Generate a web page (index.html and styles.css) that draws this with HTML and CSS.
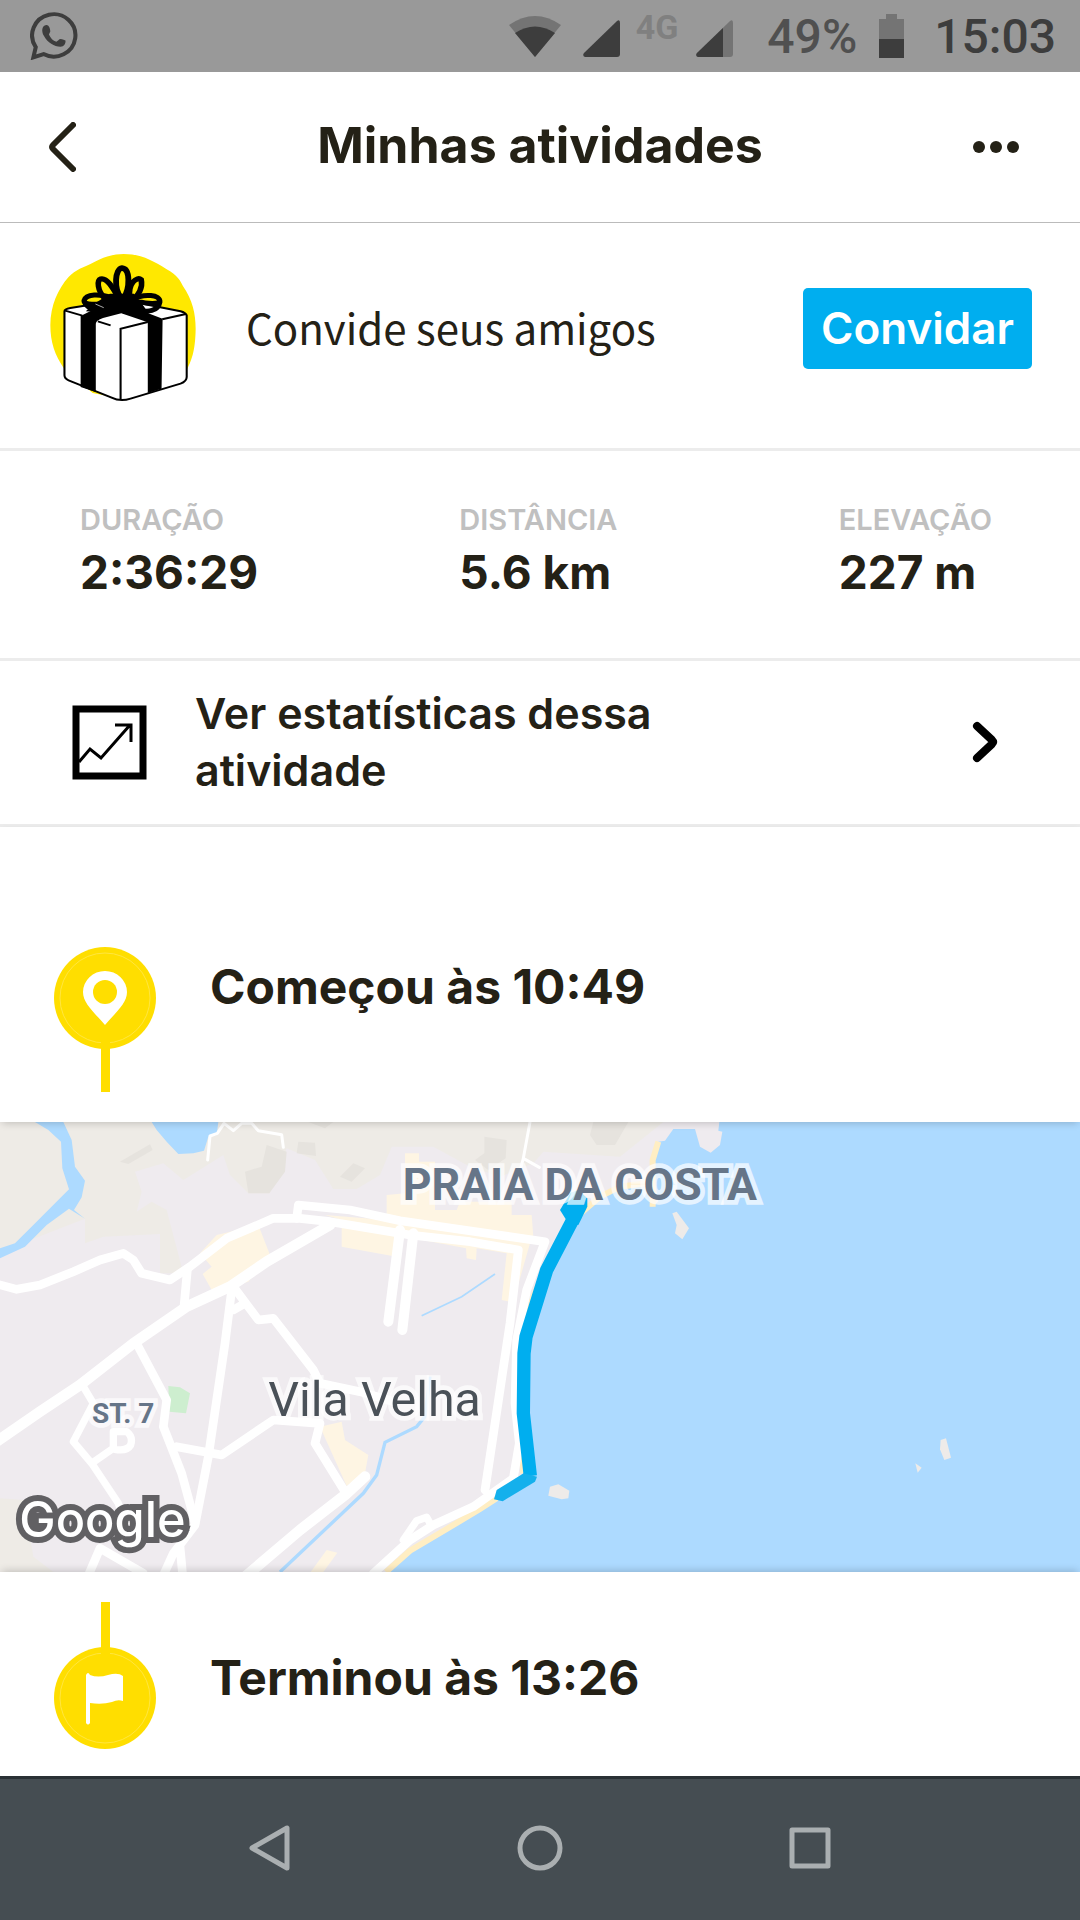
FILE: index.html
```html
<!DOCTYPE html>
<html lang="pt-BR">
<head>
  <meta charset="UTF-8" />
  <meta name="viewport" content="width=device-width, initial-scale=1.0"/>
  <title>Minhas atividades</title>
  <link rel="stylesheet" href="styles.css">
</head>
<body>

  <div class="status-bar">
    <svg class="status-app" width="48" height="48" viewBox="86 36 142 145" preserveAspectRatio="none">
      <path d="M103 142A64 64 0 1 1 126 163L96 173Z" fill="none" stroke="#3d3d3d" stroke-width="12"/>
      <path d="M134 75C121 77 119 94 127 108C138 129 158 141 176 141C187 140 192 132 191 122Q175 113 170 121L164 126C154 123 147 115 142 104L146 95C146 84 141 74 134 75Z" fill="#3d3d3d"/>
    </svg>
    <svg width="52" height="41" viewBox="0 0 52 41">
      <path d="M26 41L0 9Q26 -9 52 9Z" fill="#747474"/>
      <path d="M26 41L6 17Q26 4 46 17Z" fill="#3d3d3d"/>
    </svg>
    <svg class="signal" width="37" height="37" viewBox="0 0 37 37">
      <path d="M2 37Q-1 36 1 33L34 1Q37 -1 37 3V34Q37 37 34 37Z" fill="#3d3d3d"/>
    </svg>
    <span class="network">4G</span>
    <svg class="signal" width="37" height="37" viewBox="0 0 37 37">
      <path d="M2 37Q-1 36 1 33L34 1Q37 -1 37 3V34Q37 37 34 37Z" fill="#747474"/>
      <path d="M2 37Q-1 36 1 33L27 8V37Z" fill="#3d3d3d"/>
    </svg>
    <span class="battery-text">49%</span>
    <svg width="25" height="44" viewBox="0 0 25 44">
      <path d="M7 0H18V5H25V25H0V5H7Z" fill="#747474"/>
      <path d="M0 25H25V44H0Z" fill="#3d3d3d"/>
    </svg>
    <span class="clock">15:03</span>
  </div>

  <header class="header">
    <button class="icon-btn" aria-label="Voltar">
      <svg width="28" height="50" viewBox="0 0 28 50">
        <path d="M25 3L5 23Q3 25 5 27L25 47" fill="none" stroke="#242116" stroke-width="6" stroke-linecap="round"/>
      </svg>
    </button>
    <h1>Minhas atividades</h1>
    <button class="icon-btn" aria-label="Mais">
      <svg width="48" height="12" viewBox="0 0 48 12">
        <g fill="#242116"><circle cx="7" cy="6" r="6"/><circle cx="24" cy="6" r="6"/><circle cx="41" cy="6" r="6"/></g>
      </svg>
    </button>
  </header>

  <main>
    <section class="invite">
      <svg width="146" height="148" viewBox="146 86 424 444" preserveAspectRatio="none">
        <path d="M360 86C410 86 440 105 470 122C510 147 520 155 532 182C560 225 569 265 569 310C568 380 556 405 545 430L440 502L360 522L270 503L187 430C160 390 147 350 147 300C147 240 170 190 200 155C220 132 245 125 265 115C300 96 325 86 360 86Z" fill="#ffe800"/>
        <path d="M188 258V450Q188 460 200 465L325 517Q350 530 380 520L525 475Q543 468 543 455V270Q540 262 525 258L400 232H300L205 248Q188 251 188 258Z" fill="#fff" stroke="#000" stroke-width="6"/>
        <path d="M190 256L240 271M285 288L322 300M351 524V310L430 290M472 282L541 266" fill="none" stroke="#000" stroke-width="6"/>
        <path d="M235 272L300 238L380 232L435 265L473 280L470 490L430 503V291L353 264L300 278Q280 285 279 295V500L235 485Z"/>
        <path d="M320 205H390L420 245L430 265L380 255L330 262L250 258L270 238Z"/>
        <path d="M353 218C330 190 335 130 355 128C380 130 378 190 360 218" fill="none" stroke="#000" stroke-width="17"/>
        <path d="M305 220C283 195 282 165 293 161C313 156 330 190 345 218M378 215C372 175 398 152 411 163C417 190 400 210 390 222" fill="none" stroke="#000" stroke-width="16"/>
        <path d="M325 228C280 240 244 240 245 226C250 204 290 205 330 218M245 228Q252 248 285 256M385 222C420 203 467 208 465 230C460 258 430 262 400 253M400 228Q440 238 462 232" fill="none" stroke="#000" stroke-width="15"/>
        <path d="M278 236L302 247" stroke="#fff" stroke-width="2"/>
      </svg>
      <p>Convide seus amigos</p>
      <button class="invite-btn">Convidar</button>
    </section>

    <dl class="stats">
      <div>
        <dt>DURAÇÃO</dt>
        <dd>2:36:29</dd>
      </div>
      <div>
        <dt>DISTÂNCIA</dt>
        <dd>5.6 km</dd>
      </div>
      <div>
        <dt>ELEVAÇÃO</dt>
        <dd>227 m</dd>
      </div>
    </dl>

    <a class="stats-link" href="#">
      <svg width="75" height="75" viewBox="0 0 75 75">
        <rect x="4" y="4" width="67" height="67" fill="none" stroke="#000" stroke-width="7"/>
        <path d="M7 57L18 44L29 53L58 20M43 20H59V37" fill="none" stroke="#000" stroke-width="3"/>
      </svg>
      <span>Ver estatísticas dessa atividade</span>
      <svg width="26" height="42" viewBox="0 0 26 42">
        <path d="M5 5L20 19Q22 21 20 23L5 37" fill="none" stroke="#000" stroke-width="8" stroke-linecap="round"/>
      </svg>
    </a>

    <section class="event start">
      <svg width="102" height="145" viewBox="0 0 102 145">
        <circle cx="51" cy="51" r="51" fill="#ffde00"/>
        <circle cx="51" cy="51" r="45" fill="none" stroke="#ffe640"/>
        <path d="M47 90H56V145H47Z" fill="#ffde00"/>
        <path d="M51 78C39 64 29 56 29 45A22 21 0 0 1 73 45C73 56 63 64 51 78Z" fill="#fff"/>
        <circle cx="51" cy="45" r="12" fill="#ffde00"/>
      </svg>
      <h2>Começou às 10:49</h2>
    </section>

    <svg class="map" viewBox="0 36 3240 1350" role="img" aria-label="Mapa do percurso">
      <rect y="36" width="3240" height="1350" fill="#efebef"/>

      <!-- terrain -->
      <g fill="#eeebe6">
        <path d="M0 36H1990L1860 140L1630 125L1600 160L1500 200L1410 170L1300 110H1175L1140 195L1070 237H1000L945 150L860 115L808 250H745L690 195L670 135L550 210L490 160L405 185L425 245L410 305L455 275L500 300L550 490H480V372L310 380L255 400V326L0 425Z"/>
        <path d="M0 1165L70 1170L100 1340L160 1386H0Z"/>
      </g>
      <g fill="#e6e3de">
        <path d="M800 105L860 125L855 185L808 250H745L735 185L785 170Z"/>
        <path d="M360 155L450 103L458 120L385 162Z"/>
        <path d="M895 95L945 98L948 138L890 130Z"/>
        <path d="M1020 200L1060 160L1095 175L1055 215Z"/>
        <path d="M925 36H1000L975 55Z"/>
        <path d="M1453 80L1520 90L1517 145L1465 180L1425 150L1453 130Z"/>
        <path d="M1780 36H1885L1845 105H1790L1770 75Z"/>
      </g>
      <path d="M505 828L540 832L570 850L558 910L508 905Z" fill="#cdeecf"/>

      <!-- commercial areas -->
      <g fill="#fef5e3">
        <path d="M600 430L650 375L775 345L810 435L745 515L690 530L635 540L608 492L635 470Z"/>
        <path d="M1025 345L1200 370L1190 440L1025 410Z"/>
        <path d="M975 315L1160 330L1160 255L1215 250V130H1257V155H1305V300H1370L1380 275H1535V315H1595L1600 380L1590 400L1550 540L1530 575L1505 570L1520 430L1430 415L1428 450L1400 445L1398 415L1160 370Z"/>
        <path d="M960 950L1025 935L1035 990L1105 1035L1095 1090L1040 1128Z"/>
        <path d="M932 1386L980 1320L1012 1328L970 1386Z"/>
      </g>

      <!-- water -->
      <path d="M1160 1386L1230 1330L1340 1265L1440 1200L1490 1165L1570 1090L1555 900L1560 700L1600 560L1660 430L1730 320L1800 260L1860 230L1940 220L1955 290L1975 275L1955 150L1975 95L1995 92L2020 57H2085L2100 110L2132 128L2160 105L2167 65L2155 62L2158 36H3240V1386Z" fill="#addaff"/>
      <path d="M1158 1386L1230 1322L1340 1257L1440 1197L1490 1165M1570 1090L1555 900L1560 700L1600 560L1660 430L1730 320L1800 260L1860 230L1940 220M1958 290V150L1975 95" fill="none" stroke="#ffeec3" stroke-width="18"/>
      <g fill="#addaff">
        <path d="M105 36H190L215 90L225 170L255 212L245 262L222 300L255 326L207 296L140 345L75 410L0 445V415L45 400L100 345L207 238L187 175L183 95L145 60Z"/>
        <path d="M455 36H655L650 75L625 80L612 122L580 130L535 132L500 95L470 60Z"/>
      </g>
      <g fill="none" stroke="#addaff">
        <path d="M1265 617L1385 560L1485 492" stroke-width="5"/>
        <path d="M1290 800L1275 920L1250 950L1155 997L1130 1095L1090 1150L840 1386" stroke-width="10"/>
      </g>
      <g fill="#eeebe9">
        <path d="M2017 310L2030 305L2067 355L2047 388L2025 370L2030 345Z"/>
        <path d="M2822 990L2838 985L2853 1043L2833 1050L2820 1018Z"/>
        <path d="M2746 1060L2765 1073L2753 1088Z"/>
        <path d="M1650 1130L1675 1123L1708 1142L1705 1165L1685 1168L1645 1157Z"/>
      </g>

      <!-- roads -->
      <g fill="none" stroke="#fff" stroke-width="26" stroke-linejoin="round" stroke-linecap="round">
        <path d="M-10 995L120 905L240 825L400 700L560 590L690 530L800 455L990 345" stroke-width="32"/>
        <path d="M-10 522L50 538L120 525L220 485L300 450L370 430L400 450L425 490L510 510L570 470L680 385L820 325H900L990 335L1230 375L1410 395L1555 420L1530 640L1455 1140"/>
        <path d="M890 325L895 285L1050 300L1200 332L1635 395L1580 540L1550 690L1545 880L1558 1000L1540 1105L1420 1190L1300 1245L1230 1290L1120 1390"/>
        <path d="M1210 1290L1250 1232L1280 1222L1290 1240" stroke-width="22"/>
        <path d="M1200 360L1165 635M1240 370L1207 660" stroke-width="30"/>
        <path d="M562 480L552 590"/>
        <path d="M695 540L675 700L625 1040L585 1245L520 1330L490 1396M540 1310L548 1396"/>
        <path d="M415 710L500 870L490 950L545 1090L575 1200L585 1240"/>
        <path d="M700 530L775 630L820 625L940 780L960 820L1080 845L1180 875M700 600L735 580"/>
        <path d="M530 1010L665 1035L820 930L960 940L945 1000L1035 1145"/>
        <path d="M740 1396L900 1260L1035 1155L1095 1100" stroke-width="32"/>
        <path d="M250 830L280 880L220 995L275 1060L355 1180L375 1240M275 1060L340 1015V965L380 965Q400 980 392 1005Q380 1025 345 1018" stroke-width="22"/>
        <path d="M265 1396L300 1315L430 1390"/>
        <path d="M623 150L630 78L652 70L672 40L700 62L725 40H755L775 62L845 74L850 112M1590 36L1570 145L1555 200M1570 145L1618 172" stroke-width="9"/>
      </g>

      <!-- track -->
      <path d="M1740 270L1718 330L1640 480L1578 680L1572 730L1570 910L1591 1098" fill="none" stroke="#00aeef" stroke-width="40" stroke-linejoin="round"/>
      <path d="M1680 300L1712 248L1735 240L1762 265V290L1735 345L1705 340Z" fill="#00aeef"/>
      <path d="M1482 1168L1490 1140L1571 1090L1611 1100L1605 1115L1508 1174Z" fill="#14b0ec"/>

      <g class="map-labels">
        <text class="district" x="1208" y="270">PRAIA DA COSTA</text>
        <text class="city" x="805" y="917">Vila Velha</text>
        <text class="street" x="276" y="938">ST. 7</text>
        <text class="google" x="58" y="1280">Google</text>
      </g>
    </svg>

    <section class="event finish">
      <svg width="102" height="147" viewBox="0 0 102 147">
        <circle cx="51" cy="96" r="51" fill="#ffde00"/>
        <circle cx="51" cy="96" r="45" fill="none" stroke="#ffe640"/>
        <path d="M47 0H56V57H47Z" fill="#ffde00"/>
        <path d="M32 73Q34 69 36 73Q44 76 54 73Q64 70 69 74V99Q64 97 58 100Q48 103 36 101V121Q34 124 32 121Z" fill="#fff"/>
      </svg>
      <h2>Terminou às 13:26</h2>
    </section>
  </main>

  <nav class="nav-bar">
    <button aria-label="Voltar">
      <svg width="46" height="46" viewBox="0 0 46 46"><path d="M40 3V43L5 23Z"/></svg>
    </button>
    <button aria-label="Início">
      <svg width="46" height="46" viewBox="0 0 46 46"><circle cx="23" cy="23" r="20"/></svg>
    </button>
    <button aria-label="Recentes">
      <svg width="46" height="46" viewBox="0 0 46 46"><rect x="5" y="5" width="36" height="36"/></svg>
    </button>
  </nav>

</body>
</html>
```
FILE: styles.css
```css
* {
  box-sizing: border-box;
}

body {
  margin: 0;
  min-height: 100vh;
  display: flex;
  flex-direction: column;
  font-family: Inter, sans-serif;
  background: white;
  color: #242116;
}

h1, h2, p, dl, dd {
  margin: 0;
}

svg {
  display: block;
  flex-shrink: 0;
}

button {
  border: none;
  background: none;
  padding: 0;
  cursor: pointer;
}

.status-bar {
  display: flex;
  align-items: center;
  height: 72px;
  padding: 0 24px 0 30px;
  background: #999;
  font-family: Roboto, sans-serif;
  font-size: 48px;
  color: #3d3d3d;
}

.status-app {
  margin-right: auto;
}

.signal {
  margin-left: 22px;
  margin-top: 5px;
}

.network {
  margin-left: 16px;
  margin-right: -4px;
  padding-bottom: 18px;
  font-size: 34px;
  font-weight: 700;
  color: #808080;
}

.battery-text {
  margin: 0 22px 0 34px;
  font-weight: 500;
  color: #505050;
}

.clock {
  margin-left: 30px;
  font-weight: 500;
}

.header {
  display: flex;
  align-items: center;
  justify-content: space-between;
  height: 151px;
  padding: 0 48px 4px 48px;
  border-bottom: 1px solid #bbb;
}

.icon-btn {
  width: 60px;
  padding-top: 4px;
}

h1, h2 {
  font-size: 48px;
  line-height: 72px;
  font-weight: 700;
}

h1 {
  font-size: 50px;
}

.invite {
  display: flex;
  align-items: center;
  padding: 31px 48px 46px 50px;
  border-bottom: 3px solid #ececec;
}

.invite p {
  flex: 1;
  margin-left: 50px;
  padding-bottom: 4px;
  font-family: "Noto Sans CJK SC", sans-serif;
  font-size: 42px;
}

.invite-btn {
  padding: 0 18px;
  border-radius: 5px;
  background: #00aeef;
  color: white;
  font-family: inherit;
  font-size: 44px;
  line-height: 81px;
  font-weight: 600;
}

.stats {
  display: grid;
  grid-template-columns: 1fr 1fr auto;
  padding: 48px 88px 54px 80px;
  border-bottom: 3px solid #ececec;
}

.stats dt {
  font-size: 29px;
  line-height: 42px;
  font-weight: 600;
  color: #c0c0c0;
}

.stats dd {
  font-size: 46px;
  line-height: 63px;
  font-weight: 700;
}

.stats-link {
  display: flex;
  align-items: center;
  padding: 24px 82px 25px 72px;
  border-bottom: 3px solid #ececec;
  color: inherit;
  text-decoration: none;
}

.stats-link span {
  max-width: 520px;
  margin: 0 auto 0 48px;
  font-size: 43px;
  line-height: 57px;
  font-weight: 600;
}

.event {
  position: relative;
  display: flex;
  gap: 54px;
  padding: 30px 54px;
}

.event h2 {
  padding-top: 4px;
}

.start {
  padding-top: 120px;
  box-shadow: 0 3px 8px -2px rgba(0, 0, 0, 0.2);
}

.finish {
  align-items: center;
  padding-bottom: 27px;
  box-shadow: 0 -3px 8px -2px rgba(0, 0, 0, 0.2);
}

.map {
  width: 100%;
  height: auto;
}

.map-labels {
  font-family: Roboto, sans-serif;
  paint-order: stroke;
  stroke: rgba(255, 255, 255, 0.7);
  stroke-width: 28px;
}

.district {
  font-size: 134px;
  font-weight: 700;
  fill: #667588;
}

.city {
  font-size: 145px;
  fill: #4a5158;
}

.street {
  font-size: 84px;
  font-weight: 700;
  fill: #667588;
}

.google {
  font-family: Inter, sans-serif;
  font-size: 146px;
  font-weight: 500;
  fill: white;
  stroke: #616063;
  stroke-width: 36px;
}

.nav-bar {
  flex: 1;
  display: flex;
  align-items: center;
  justify-content: center;
  gap: 224px;
  min-height: 144px;
  padding-bottom: 4px;
  border-top: 3px solid #2b3236;
  background: #454d52;
}

.nav-bar svg {
  fill: none;
  stroke: #aaafb1;
  stroke-width: 5px;
  stroke-linejoin: round;
}
```
